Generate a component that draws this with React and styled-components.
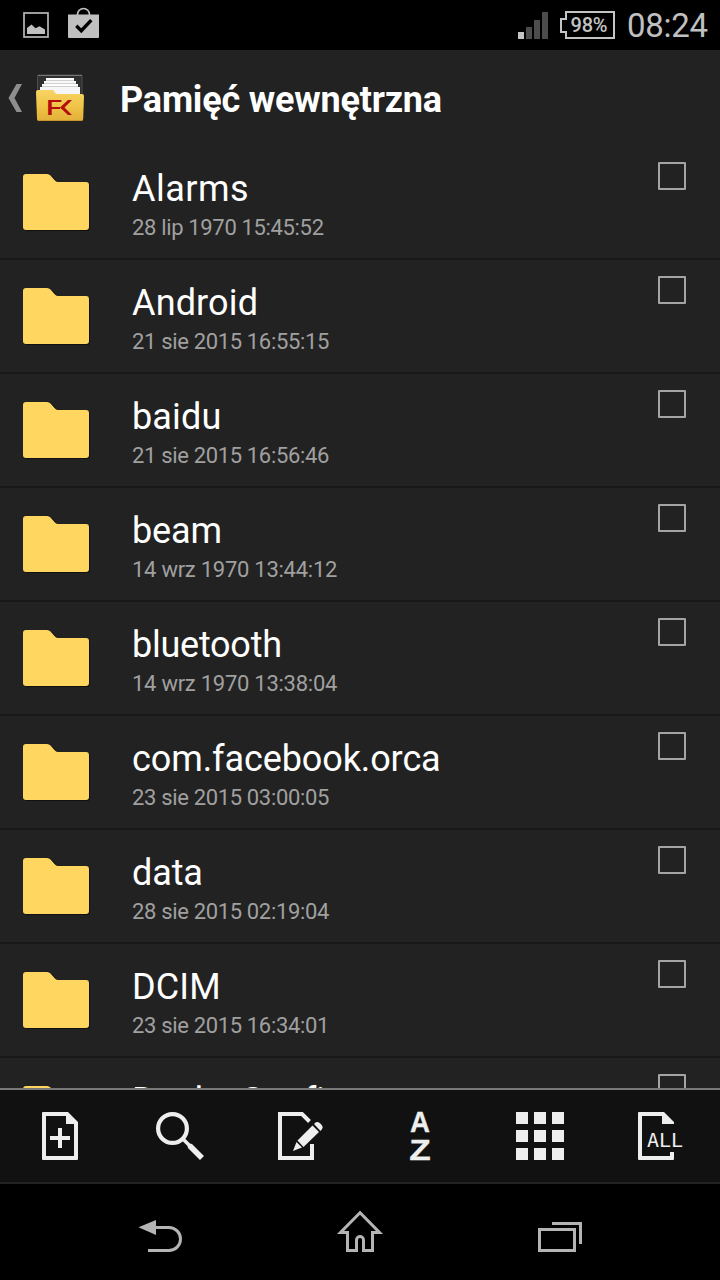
import React from "react";
import styled, { createGlobalStyle } from "styled-components";

const folders = [
  { name: "Alarms", date: "28 lip 1970 15:45:52", tracking: 0.5 },
  { name: "Android", date: "21 sie 2015 16:55:15", tracking: 0.15 },
  { name: "baidu", date: "21 sie 2015 16:56:46", tracking: 0.15 },
  { name: "beam", date: "14 wrz 1970 13:44:12", tracking: -0.1, dateTracking: -0.26 },
  { name: "bluetooth", date: "14 wrz 1970 13:38:04", tracking: -0.25, dateTracking: -0.26 },
  { name: "com.facebook.orca", date: "23 sie 2015 03:00:05", tracking: -0.1 },
  { name: "data", date: "28 sie 2015 02:19:04", tracking: -0.1 },
  { name: "DCIM", date: "23 sie 2015 16:34:01", tracking: 0.1 },
  { name: "Docks Config", date: "", tracking: -0.1 },
];

function App() {
  return (
    <Screen>
      <GlobalStyle />
      <StatusBar>
        <StatusGroup $gap={19}>
          <PictureIcon />
          <StoreIcon />
        </StatusGroup>
        <StatusGroup $gap={12}>
          <SignalIcon />
          <Battery>
            <BatteryOutline />
            <BatteryText>98%</BatteryText>
          </Battery>
          <Clock>08:24</Clock>
        </StatusGroup>
      </StatusBar>
      <Header>
        <BackArrow />
        <AppLogo />
        <Title>Pamięć wewnętrzna</Title>
      </Header>
      <FolderList>
        {folders.map((folder) => (
          <FolderRow key={folder.name}>
            <FolderIcon />
            <FolderInfo>
              <FolderName $tracking={folder.tracking}>{folder.name}</FolderName>
              <FolderDate $tracking={folder.dateTracking}>{folder.date}</FolderDate>
            </FolderInfo>
            <Checkbox />
          </FolderRow>
        ))}
      </FolderList>
      <Toolbar>
        <NewFileIcon />
        <SearchIcon />
        <EditIcon />
        <SortIcon />
        <GridIcon />
        <SelectAllIcon />
      </Toolbar>
      <NavBar>
        <NavBackIcon />
        <NavHomeIcon />
        <NavRecentIcon />
      </NavBar>
    </Screen>
  );
}

function PictureIcon() {
  return (
    <svg width="26" height="26" viewBox="0 0 26 26">
      <rect x="1" y="1" width="24" height="24" fill="none" stroke="#b8b8b8" strokeWidth="1.7" />
      <path d="M4 22v-6l2-1.5 2.500-2 4 3.800 4-2 5.500 3.200V22z" fill="#c0c0c0" />
    </svg>
  );
}

function StoreIcon() {
  return (
    <StoreSvg width="31" height="32" viewBox="0 0 31 32">
      <path d="M9.500 8V7.500a6 6 0 0 1 12 0V8" fill="none" stroke="#c0c0c0" strokeWidth="1.7" />
      <path d="M0 7.500h31V30q0 1-1 1H1q-1 0-1-1z" fill="#c0c0c0" />
      <path d="M8.300 18.700l5 5L23.300 13.200" fill="none" stroke="#000" strokeWidth="3.4" />
    </StoreSvg>
  );
}

function SignalIcon() {
  return (
    <svg width="30" height="27" viewBox="0 0 30 27">
      <path d="M0 20h6v7H0z" fill="#c4c4c4" />
      <path d="M8 15h6v12H8zM16 8h6v19h-6zM24 0h6v27h-6z" fill="#4c4c4c" />
    </svg>
  );
}

function BatteryOutline() {
  return (
    <BatterySvg width="55" height="28" viewBox="0 0 55 28">
      <path d="M6 1h48v26H6v-6H1V8h5z" fill="none" stroke="#c4c4c4" strokeWidth="2" />
    </BatterySvg>
  );
}

function BackArrow() {
  return (
    <svg width="14" height="28" viewBox="0 0 14 28">
      <path d="M8.500 0H14L6.500 14 14 28H8.500L.5 14z" fill="#8e8e8e" />
    </svg>
  );
}

function AppLogo() {
  return (
    <LogoSvg width="48" height="48" viewBox="0 0 48 48">
      <defs>
        <linearGradient id="front" x1="0" y1="0" x2="0" y2="1">
          <stop offset="0" stopColor="#f8d464" />
          <stop offset="0.5" stopColor="#f0c548" />
          <stop offset="1" stopColor="#e2b038" />
        </linearGradient>
      </defs>
      <rect x="1.500" y="1" width="44.500" height="30" rx="1" fill="#303030" stroke="#4c4c4c" />
      <path d="M2 1.500h44" stroke="#777" />
      <path d="M10 4h28v4H10z" fill="#fff" />
      <path d="M8 7h32v4H8z" fill="#f8f8f8" />
      <path d="M6 10h36v4H6z" fill="#fff" />
      <path d="M4 13h40v12H4z" fill="#f6f6f6" />
      <path d="M10 6.500h28M8 9.500h32M6 12.500h36" stroke="#d0d0d0" />
      <path
        d="M0 18q0-2 2-2h14q1 0 2 1l2 3h26q2 0 2 2l-.8 23q0 2-2 2H3q-2 0-2-2z"
        fill="url(#front)"
      />
      <path d="M2 46.500h44" stroke="#c8962a" />
      <text
        x="10"
        y="40.5"
        fontFamily="Roboto"
        fontWeight="500"
        fontSize="20.5"
        textLength="16"
        lengthAdjust="spacingAndGlyphs"
        fill="#b30d0d"
      >
        F
      </text>
      <path d="M36 26h-4L24 33.500l8 7.500h4l-7.500-7.500z" fill="#b30d0d" />
    </LogoSvg>
  );
}

function FolderIcon() {
  return (
    <FolderSvg width="68" height="58" viewBox="0 0 68 58">
      <path
        d="M4 1h22q2 0 3.500 1.500l5 5q1.300 1.300 3 1.300H64q3 0 3 3V54q0 3-3 3H4q-3 0-3-3V4q0-3 3-3z"
        fill="#111"
      />
      <path
        d="M3 0h21q2 0 3.500 1.500l4 4.500q1.500 2 3.500 2H63q3 0 3 3v42q0 3-3 3H3q-3 0-3-3V3q0-3 3-3z"
        fill="#ffd760"
      />
    </FolderSvg>
  );
}

function NewFileIcon() {
  return (
    <svg width="48" height="48" viewBox="0 0 48 48">
      <path
        d="M7 0h25l10 10v37q0 1-1 1H7q-1 0-1-1V1q0-1 1-1zM10 4v40h28V12h-8V4z"
        fill="#eee"
        fillRule="evenodd"
      />
      <path d="M22 16h4v8h8v4h-8v8h-4v-8h-8v-4h8z" fill="#eee" />
    </svg>
  );
}

function SearchIcon() {
  return (
    <svg width="48" height="48" viewBox="0 0 48 48">
      <circle cx="16.500" cy="16.500" r="14.400" fill="none" stroke="#eee" strokeWidth="4.2" />
      <path d="M26 28.500l2.500-2.500 5.500 5.500 2 .5 12 12-4 4-12-12-.5-2z" fill="#eee" />
    </svg>
  );
}

function EditIcon() {
  return (
    <svg width="48" height="48" viewBox="0 0 48 48">
      <path d="M33.500 9.500L26 2H4v44h32V32" fill="none" stroke="#eee" strokeWidth="4" />
      <path d="M36.500 13.500l6.500 6.500-15.500 15-6-6.500z" fill="#eee" />
      <path d="M38 12l1.500-1.500q2-1.500 4.500.7l1.500 1.500q2 2 .6 4.400L44.500 19z" fill="#eee" />
      <path d="M20.500 30l5.500 5.500L17 39z" fill="#eee" />
    </svg>
  );
}

function SortIcon() {
  return (
    <SortSvg width="48" height="48" viewBox="0 0 48 48">
      <text x="14" y="20" textLength="20" lengthAdjust="spacingAndGlyphs">
        A
      </text>
      <text x="13.3" y="48" textLength="21.5" lengthAdjust="spacingAndGlyphs">
        Z
      </text>
    </SortSvg>
  );
}

function GridIcon() {
  return (
    <svg width="48" height="48" viewBox="0 0 48 48">
      {[0, 18, 36].map((y) =>
        [0, 18, 36].map((x) => (
          <rect key={`${x}-${y}`} x={x} y={y} width="12" height="12" fill="#eee" />
        ))
      )}
    </svg>
  );
}

function SelectAllIcon() {
  return (
    <svg width="48" height="48" viewBox="0 0 48 48">
      <path
        d="M3 0h25l10 10v2H26V4H6v40h28v-4h4v7q0 1-1 1H3q-1 0-1-1V1q0-1 1-1z"
        fill="#eee"
      />
      <text
        x="11"
        y="35"
        fontFamily="DejaVu Sans Mono, monospace"
        fontSize="19"
        textLength="36"
        lengthAdjust="spacingAndGlyphs"
        fill="#eee"
      >
        ALL
      </text>
    </svg>
  );
}

function NavBackIcon() {
  return (
    <svg width="48" height="48" viewBox="0 0 48 48">
      <path d="M2.500 19.200L20 12v15z" fill="#b4b4b4" />
      <path d="M18 19.500h15a11.500 11.500 0 0 1 0 23H12" fill="none" stroke="#b4b4b4" strokeWidth="3" />
    </svg>
  );
}

function NavHomeIcon() {
  return (
    <svg width="48" height="48" viewBox="0 0 48 48">
      <path
        d="M24 4.700L4.500 24.500h7v18h9V32a3.500 3.500 0 0 1 7 0v10.500h9v-18h7z"
        fill="none"
        stroke="#b4b4b4"
        strokeWidth="3"
      />
    </svg>
  );
}

function NavRecentIcon() {
  return (
    <svg width="48" height="48" viewBox="0 0 48 48">
      <rect x="3.500" y="21.500" width="35" height="21" fill="none" stroke="#b4b4b4" strokeWidth="3" />
      <path d="M16 15.500h28.500V36" fill="none" stroke="#b4b4b4" strokeWidth="3" />
    </svg>
  );
}

const GlobalStyle = createGlobalStyle`
  body {
    margin: 0;
    background-color: #000;
  }
  svg {
    display: block;
    flex-shrink: 0;
  }
`;

const Screen = styled.div`
  width: 720px;
  height: 1280px;
  display: flex;
  flex-direction: column;
  overflow: hidden;
  color: #fff;
  background-color: #222;
  font-family: Roboto, sans-serif;
`;

const StatusBar = styled.div`
  height: 50px;
  padding: 0 12px 0 23px;
  box-sizing: border-box;
  display: flex;
  align-items: center;
  justify-content: space-between;
  background-color: #000;
`;

const StatusGroup = styled.div`
  display: flex;
  align-items: center;
  gap: ${(props) => props.$gap}px;
`;

const StoreSvg = styled.svg`
  margin-bottom: 5px;
`;

const Battery = styled.div`
  width: 55px;
  height: 28px;
  display: grid;
`;

const BatterySvg = styled.svg`
  grid-area: 1 / 1;
`;

const BatteryText = styled.div`
  grid-area: 1 / 1;
  padding-left: 10.5px;
  font-size: 20px;
  line-height: 28px;
  font-weight: 500;
  letter-spacing: -0.2px;
  color: #c4c4c4;
`;

const Clock = styled.div`
  width: 81px;
  padding-top: 2px;
  font-size: 33px;
  line-height: 50px;
  letter-spacing: -0.3px;
  color: #c0c0c0;
`;

const Header = styled.div`
  height: 96px;
  padding-left: 8px;
  display: flex;
  align-items: center;
`;

const LogoSvg = styled.svg`
  margin-left: 14px;
`;

const Title = styled.div`
  margin: 3px 0 0 36px;
  font-size: 36px;
  font-weight: 700;
  letter-spacing: -0.2px;
`;

const FolderList = styled.div`
  height: 942px;
  overflow: hidden;
`;

const FolderRow = styled.div`
  height: 114px;
  padding: 0 34px 0 23px;
  box-sizing: border-box;
  border-bottom: 2px solid #181818;
  display: flex;
`;

const FolderSvg = styled.svg`
  margin-top: 28px;
`;

const FolderInfo = styled.div`
  flex: 1;
  padding: 21px 0 0 41px;
`;

const FolderName = styled.div`
  font-size: 36px;
  line-height: 44px;
  letter-spacing: ${(props) => props.$tracking}px;
  white-space: nowrap;
`;

const FolderDate = styled.div`
  font-size: 22px;
  line-height: 34px;
  letter-spacing: ${(props) => props.$tracking || -0.34}px;
  color: #a0a0a0;
`;

const Checkbox = styled.div`
  width: 28px;
  height: 28px;
  margin-top: 16px;
  box-sizing: border-box;
  border: 2px solid #a4a4a4;
  border-radius: 1px;
`;

const Toolbar = styled.div`
  height: 96px;
  box-sizing: border-box;
  border-top: 2px solid #787878;
  border-bottom: 2px solid #222;
  background-color: #111;
  display: grid;
  grid-template-columns: repeat(6, 1fr);
  place-items: center;
`;

const SortSvg = styled.svg`
  overflow: visible;
  font-family: "Liberation Sans", sans-serif;
  font-size: 29px;
  font-weight: 700;
  fill: #eee;
  stroke: #eee;
  stroke-width: 0.3px;
`;

const NavBar = styled.div`
  height: 96px;
  padding: 0 60px;
  background-color: #000;
  display: grid;
  grid-template-columns: repeat(3, 1fr);
  place-items: center;
`;

export default App;
